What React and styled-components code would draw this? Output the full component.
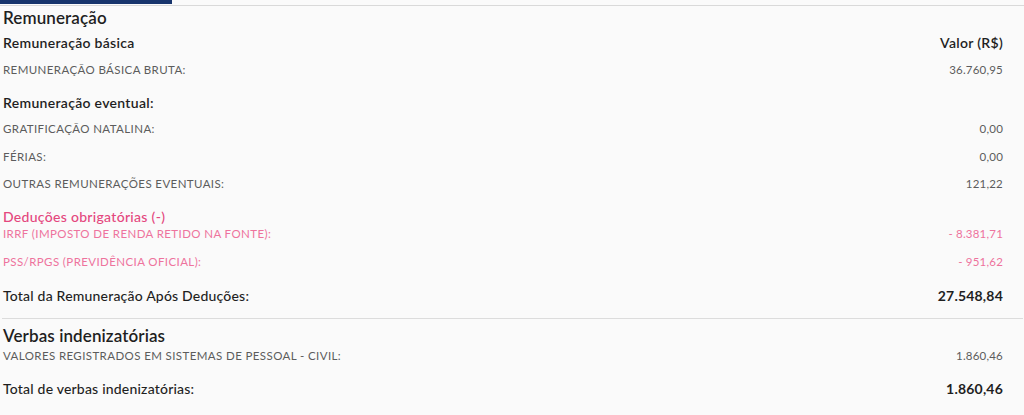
import styled, { createGlobalStyle } from 'styled-components';

const GlobalStyle = createGlobalStyle`
  body {
    margin: 0;
    background: #fafafa;
    font-family: "Lato", "Open Sans", sans-serif;
  }
`;

const Page = styled.div`
  width: 1024px;
  height: 415px;
  padding: 0 1px 0 2px;
  box-sizing: border-box;
  background: #fafafa;
  color: #212121;
  overflow: hidden;
`;

const TabBar = styled.div`
  height: 5px;
  margin: 0 -1px 0 -2px;
  border-bottom: 1px solid #d9d9d9;
`;

const TabIndicator = styled.div`
  width: 172px;
  height: 4px;
  background: #17346c;
`;

const SectionTitle = styled.h2`
  margin: ${(p) => p.$top || 0}px 0 0;
  padding-left: 1px;
  font-size: 17px;
  line-height: 22px;
  font-weight: 600;
  letter-spacing: 0.1px;
  color: #1f1f1f;
`;

const Row = styled.div`
  display: flex;
  justify-content: space-between;
  align-items: center;
  padding: 0 20px 0 1px;
  margin-top: ${(p) => p.$top || 0}px;
`;

const HeadRow = styled(Row)`
  font-size: 14px;
  line-height: ${(p) => (p.$tight ? 18 : 20)}px;
  letter-spacing: 0.3px;
  color: ${(p) => (p.$pink ? '#e4477e' : '#1f1f1f')};
  font-weight: ${(p) => (p.$pink ? 500 : 600)};
`;

const ItemRow = styled(Row)`
  font-size: 11.5px;
  line-height: 16px;
  letter-spacing: 0.4px;
  color: ${(p) => (p.$pink ? '#ee739d' : '#5c5c5c')};
`;

const Value = styled.span`
  letter-spacing: 0.2px;
  font-weight: ${(p) => (p.$strong ? 700 : 400)};
`;

const TotalRow = styled(Row)`
  font-size: 14px;
  line-height: 20px;
  font-weight: 500;
  letter-spacing: 0.2px;
  color: #1f1f1f;
`;

const Divider = styled.hr`
  margin: 12px 0 0;
  border: 0;
  border-top: 1px solid #dcdcdc;
`;

function Item({ label, value, top, pink }) {
  return (
    <ItemRow $top={top} $pink={pink}>
      <span>{label}</span>
      <Value>{value}</Value>
    </ItemRow>
  );
}

function Total({ label, value, top }) {
  return (
    <TotalRow $top={top}>
      <span>{label}</span>
      <Value $strong>{value}</Value>
    </TotalRow>
  );
}

export default function App() {
  return (
    <Page>
      <GlobalStyle />
      <TabBar>
        <TabIndicator />
      </TabBar>

      <SectionTitle $top={1}>Remuneração</SectionTitle>
      <HeadRow $top={4}>
        <span>Remuneração básica</span>
        <span>Valor (R$)</span>
      </HeadRow>
      <Item top={9} label="REMUNERAÇÃO BÁSICA BRUTA:" value="36.760,95" />

      <HeadRow $top={15}>
        <span>Remuneração eventual:</span>
      </HeadRow>
      <Item top={8} label="GRATIFICAÇÃO NATALINA:" value="0,00" />
      <Item top={11.5} label="FÉRIAS:" value="0,00" />
      <Item top={11.5} label="OUTRAS REMUNERAÇÕES EVENTUAIS:" value="121,22" />

      <HeadRow $top={16} $pink $tight>
        <span>Deduções obrigatórias (-)</span>
      </HeadRow>
      <Item pink label="IRRF (IMPOSTO DE RENDA RETIDO NA FONTE):" value="- 8.381,71" />
      <Item pink top={12} label="PSS/RPGS (PREVIDÊNCIA OFICIAL):" value="- 951,62" />

      <Total top={16} label="Total da Remuneração Após Deduções:" value="27.548,84" />

      <Divider />

      <SectionTitle $top={6}>Verbas indenizatórias</SectionTitle>
      <Item top={1} label="VALORES REGISTRADOS EM SISTEMAS DE PESSOAL - CIVIL:" value="1.860,46" />
      <Total top={15} label="Total de verbas indenizatórias:" value="1.860,46" />
    </Page>
  );
}
